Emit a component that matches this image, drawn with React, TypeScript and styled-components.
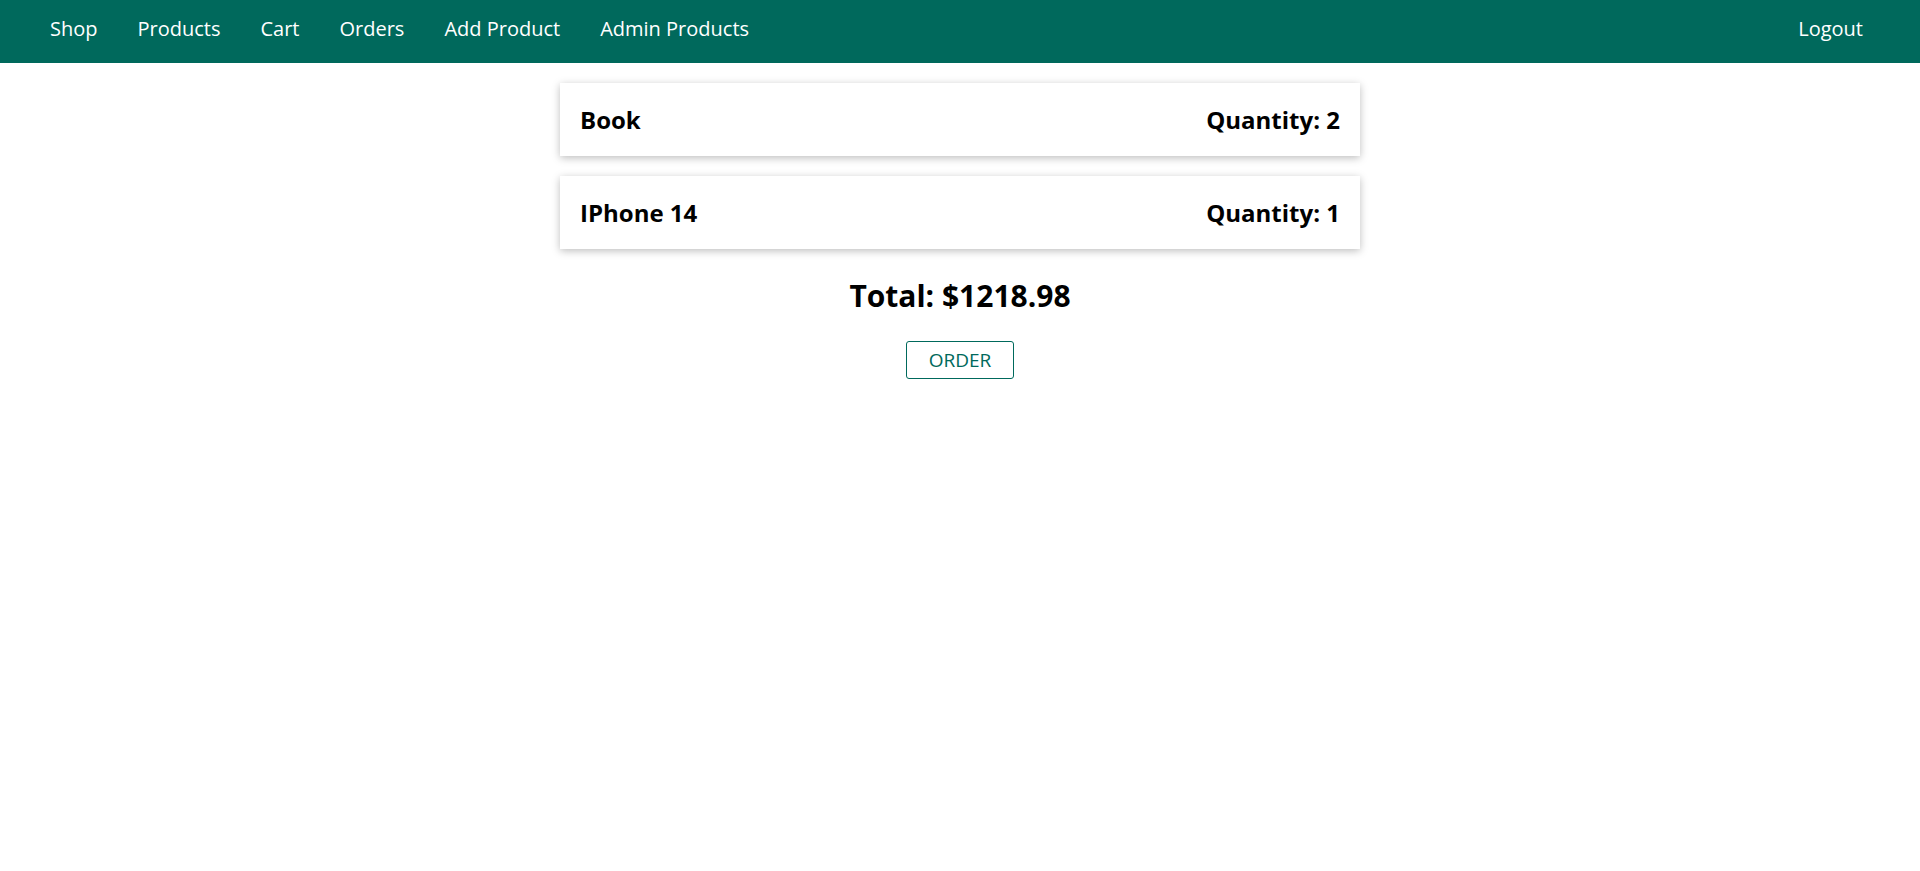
import React from 'react';
import styled, { createGlobalStyle } from 'styled-components';

const GlobalStyle = createGlobalStyle`
  * {
    box-sizing: border-box;
  }

  body {
    margin: 0;
    padding: 0;
    font-family: 'Open Sans', 'Noto Sans', sans-serif;
    background: #fff;
    color: #000;
  }
`;

const Header = styled.header`
  width: 100%;
  height: 63px;
  background-color: #00695c;
  padding: 0 57px 7px 50px;
  display: flex;
  align-items: center;
  justify-content: space-between;
`;

const NavList = styled.ul`
  list-style: none;
  margin: 0;
  padding: 0;
  display: flex;
  align-items: center;
  gap: 40px;
`;

const NavItem = styled.li`
  margin: 0;
  padding: 0;
`;

const NavLink = styled.a`
  font-size: 20px;
  color: #fff;
  text-decoration: none;
`;

const Main = styled.main`
  padding: 20px 0;
  display: flex;
  flex-direction: column;
  align-items: center;
`;

const CartList = styled.ul`
  list-style: none;
  margin: 0;
  padding: 0;
  width: 800px;
  display: flex;
  flex-direction: column;
  gap: 20px;
`;

const CartItem = styled.li`
  display: flex;
  justify-content: space-between;
  align-items: center;
  padding: 20px;
  background: #fff;
  box-shadow: 0 2px 8px rgba(0, 0, 0, 0.26);
`;

const ItemTitle = styled.h1`
  margin: 0;
  font-size: 24px;
  font-weight: 700;
`;

const Total = styled.h2`
  margin: 26px 0 25px;
  font-size: 30px;
  font-weight: 700;
  text-align: center;
`;

const OrderButton = styled.button`
  font: inherit;
  font-size: 19px;
  line-height: 26px;
  padding: 5px 22px;
  border: 1px solid #00695c;
  border-radius: 3px;
  color: #00695c;
  background: white;
  cursor: pointer;

  &:hover {
    background-color: #00695c;
    color: white;
  }
`;

const items = [
  { title: 'Book', quantity: 2 },
  { title: 'IPhone 14', quantity: 1 },
];

export default function App() {
  return (
    <>
      <GlobalStyle />
      <Header>
        <NavList>
          <NavItem><NavLink href='/'>Shop</NavLink></NavItem>
          <NavItem><NavLink href='/products'>Products</NavLink></NavItem>
          <NavItem><NavLink href='/cart'>Cart</NavLink></NavItem>
          <NavItem><NavLink href='/orders'>Orders</NavLink></NavItem>
          <NavItem><NavLink href='/admin/add-product'>Add Product</NavLink></NavItem>
          <NavItem><NavLink href='/admin/products'>Admin Products</NavLink></NavItem>
        </NavList>
        <NavList>
          <NavItem><NavLink href='/logout'>Logout</NavLink></NavItem>
        </NavList>
      </Header>

      <Main>
        <CartList>
          {items.map((item) => (
            <CartItem key={item.title}>
              <ItemTitle>{item.title}</ItemTitle>
              <ItemTitle as='h2'>Quantity: {item.quantity}</ItemTitle>
            </CartItem>
          ))}
        </CartList>
        <Total>Total: $1218.98</Total>
        <OrderButton type='button'>ORDER</OrderButton>
      </Main>
    </>
  );
}
